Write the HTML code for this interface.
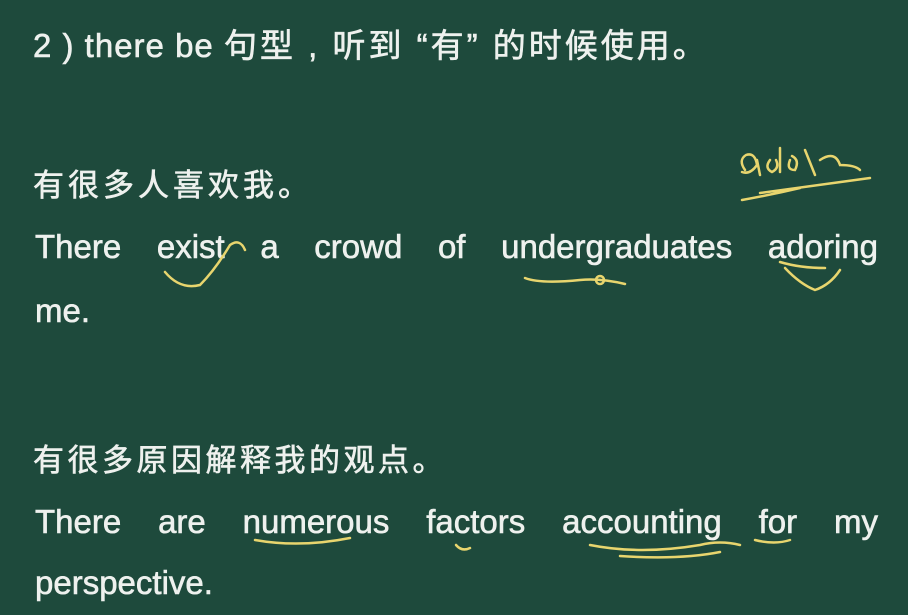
<!DOCTYPE html>
<html><head><meta charset="utf-8"><style>
html,body{margin:0;padding:0;}
body{width:908px;height:615px;overflow:hidden;background:#1e4a3c;position:relative;font-family:"Liberation Sans","Noto Sans CJK SC",sans-serif;color:#eef1ee;-webkit-text-stroke:0.6px #eef1ee;}
.t{position:absolute;white-space:nowrap;}
.cn{font-size:31px;}
.en{font-size:33px;left:35px;width:843px;text-align:justify;text-align-last:justify;}
svg{position:absolute;left:0;top:0;}
</style></head><body>
<div class="t" style="left:33px;top:19px;font-size:33px;letter-spacing:1px;">2 ) there be <span style="letter-spacing:3px">句型 , 听到 “有” 的时候使用。</span></div>
<div class="t cn" style="left:33px;top:160px;letter-spacing:4px;">有很多人喜欢我。</div>
<div class="t en" style="top:228px;">There exist a crowd of undergraduates adoring</div>
<div class="t" style="left:35px;top:292px;font-size:33px;">me.</div>
<div class="t cn" style="left:33px;top:435px;letter-spacing:3.5px;">有很多原因解释我的观点。</div>
<div class="t en" style="top:503px;">There are numerous factors accounting for my</div>
<div class="t" style="left:35px;top:564px;font-size:33px;">perspective.</div>
<svg width="908" height="615" fill="none" stroke="#e8d56e" stroke-width="2.5" stroke-linecap="round">
<path d="M165 272 Q180 290 200 285 Q215 270 230 245 Q240 238 245 250"/>
<path d="M525 278 Q540 284 580 280 Q600 278 625 284"/>
<circle cx="600" cy="280" r="4"/>
<path d="M785 268 Q800 284 815 290 Q830 285 840 270 M780 262 Q800 268 825 268"/>
<path d="M745 170 Q738 160 746 155 Q755 152 757 165 Q750 175 742 172 M757 160 L760 175"/>
<path d="M770 160 Q764 168 772 172 Q780 168 776 160 M780 148 L780 172 M790 160 Q786 170 795 170 Q800 160 792 156"/>
<path d="M805 150 L815 175 M820 160 Q835 150 840 165 Q855 165 860 170"/>
<path d="M742 200 Q770 195 800 188 M760 193 Q820 185 870 178"/>
<path d="M255 540 Q300 548 350 538"/>
<path d="M456 545 Q462 552 470 548"/>
<path d="M590 545 Q640 555 700 545 Q720 540 740 545 M620 556 Q680 560 720 552"/>
<path d="M755 540 Q775 545 790 540"/>
</svg>
</body></html>
